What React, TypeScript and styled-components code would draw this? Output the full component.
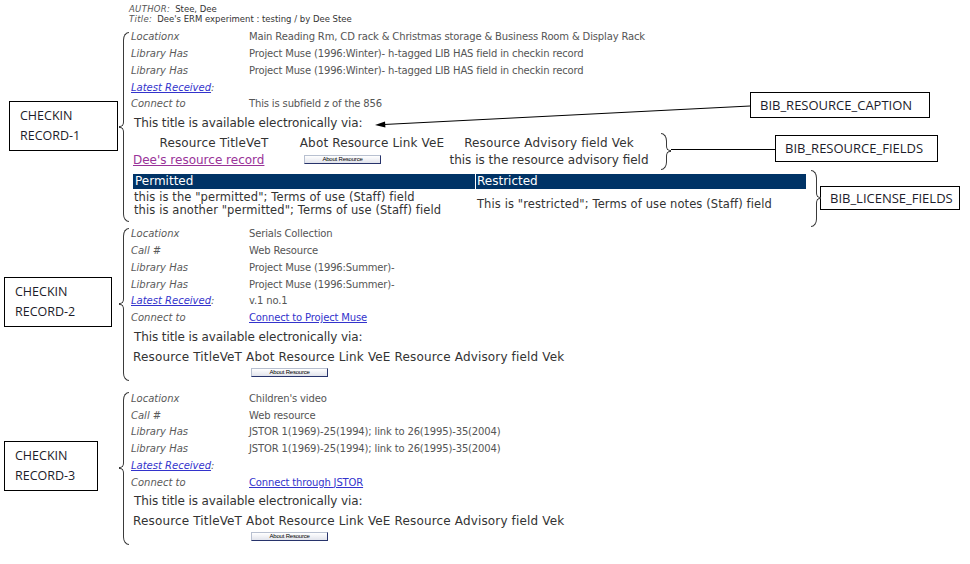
import React from 'react';
import styled, { createGlobalStyle } from 'styled-components';

const GlobalStyle = createGlobalStyle`
  html, body {
    margin: 0;
    padding: 0;
    background: #fff;
  }
  body {
    font-family: 'DejaVu Sans', Verdana, sans-serif;
    color: #333;
  }
`;

const Page = styled.div`
  width: 970px;
  height: 564px;
  overflow: hidden;
  padding-top: 4px;
  box-sizing: border-box;
`;

const BibHeader = styled.div`
  margin: 0 0 4.6px 129px;
  font-size: 8.5px;
  line-height: 10px;
  color: #333;
`;

const HeaderLine = styled.div`
  display: flex;
  gap: 5px;
`;

const HeaderLabel = styled.span`
  font-style: italic;
  color: #555;
  letter-spacing: 0.3px;
`;

const Record = styled.section`
  display: flex;
`;

const CalloutColumn = styled.div`
  width: 119px;
  flex-shrink: 0;
  display: flex;
  align-items: center;
`;

const Callout = styled.div<{ $left: number; $width: number; $lift: number }>`
  box-sizing: border-box;
  margin-left: ${(p) => p.$left}px;
  margin-bottom: ${(p) => p.$lift * 2}px;
  width: ${(p) => p.$width}px;
  height: 50px;
  padding: 4px 0 0 10px;
  border: 1px solid #000;
  font-family: 'Open Sans', sans-serif;
  font-size: 12.5px;
  line-height: 20px;
  color: #1c1c2a;
`;

const NoteBox = styled.div<{ $width: number; $height: number }>`
  box-sizing: border-box;
  flex-shrink: 0;
  width: ${(p) => p.$width}px;
  height: ${(p) => p.$height}px;
  padding-left: 9px;
  border: 1px solid #000;
  background: #fff;
  font-family: 'Open Sans', sans-serif;
  font-size: 13px;
  line-height: ${(p) => p.$height - 2}px;
  color: #1c1c2a;
  white-space: nowrap;
`;

/* curly brace built from four bordered pieces; flipped for the right-hand notes */
const BraceWrap = styled.div<{ $top: number; $bottom: number; $flip?: boolean; $height?: number }>`
  box-sizing: border-box;
  width: 10px;
  flex-shrink: 0;
  display: flex;
  flex-direction: column;
  padding: ${(p) => p.$top}px 0 ${(p) => p.$bottom}px;
  ${(p) => (p.$height ? `height: ${p.$height}px;` : '')}
  ${(p) => (p.$flip ? 'transform: scaleX(-1);' : '')}
`;

const BraceArm = styled.div<{ $end: 'top' | 'bottom' }>`
  flex: 1;
  margin-left: 4px;
  border-left: 1px solid #3a3a3a;
  ${(p) =>
    p.$end === 'top'
      ? 'border-top: 1px solid #3a3a3a; border-top-left-radius: 6px 8px;'
      : 'border-bottom: 1px solid #3a3a3a; border-bottom-left-radius: 6px 8px;'}
`;

const BraceTip = styled.div<{ $end: 'top' | 'bottom' }>`
  box-sizing: border-box;
  width: 5px;
  height: 5px;
  border-right: 1px solid #3a3a3a;
  ${(p) =>
    p.$end === 'top'
      ? 'border-bottom: 1px solid #3a3a3a; border-bottom-right-radius: 4px 5px;'
      : 'border-top: 1px solid #3a3a3a; border-top-right-radius: 4px 5px;'}
`;

type BraceProps = {
  top?: number;
  bottom?: number;
  flip?: boolean;
  height?: number;
  style?: React.CSSProperties;
};

const Brace = ({ top = 0, bottom = 0, flip, height, style }: BraceProps) => (
  <BraceWrap $top={top} $bottom={bottom} $flip={flip} $height={height} style={style}>
    <BraceArm $end="top" />
    <BraceTip $end="top" />
    <BraceTip $end="bottom" />
    <BraceArm $end="bottom" />
  </BraceWrap>
);

const RecordBody = styled.div`
  margin-left: 2px;
  padding-bottom: 8px;
  flex: 1;
  min-width: 0;
`;

const FieldGrid = styled.div`
  display: grid;
  grid-template-columns: 118px auto;
  grid-auto-rows: 16.75px;
  align-items: center;
  font-size: 10px;
  letter-spacing: -0.15px;
  color: #555;
  white-space: nowrap;
`;

const FieldLabel = styled.div`
  font-style: italic;
  color: #5a5a5a;
  letter-spacing: 0;
`;

const FieldLink = styled.a`
  color: #3333cc;
  text-decoration: underline;
`;

const Caption = styled.div`
  position: relative;
  padding: 4px 0 0 3px;
  font-size: 12px;
  line-height: 15px;
  letter-spacing: -0.1px;
  color: #333;
`;

const CaptionNote = styled.div`
  position: absolute;
  left: 619px;
  top: -20.35px;
  letter-spacing: 0;
`;

const CaptionArrow = styled.svg`
  position: absolute;
  left: 239px;
  top: -12.35px;
  overflow: visible;
`;

const ResourceBlock = styled.div`
  margin-top: 4px;
`;

const AnnotatedRow = styled.div<{ $gap: number }>`
  display: flex;
  align-items: flex-start;
  margin-top: ${(p) => p.$gap}px;
`;

const ResourceTable = styled.table`
  border-collapse: collapse;
  border-spacing: 0;
  font-size: 12px;
  color: #333;
  flex-shrink: 0;
`;

const ResourceHead = styled.th<{ $width?: number }>`
  font-weight: normal;
  padding: 0 2px;
  line-height: 17px;
  letter-spacing: 0.15px;
  text-align: center;
  white-space: nowrap;
  ${(p) => (p.$width ? `width: ${p.$width}px;` : '')}
`;

const ResourceCell = styled.td<{ $center?: boolean }>`
  padding: 0 2px;
  line-height: 17px;
  white-space: nowrap;
  text-align: ${(p) => (p.$center ? 'center' : 'left')};
  vertical-align: middle;
`;

const ResourceLink = styled.a`
  color: #993399;
  text-decoration: underline;
`;

const AboutButton = styled.button`
  display: block;
  box-sizing: border-box;
  width: 77px;
  height: 9px;
  margin: 2px 0 5px 5px;
  padding: 0;
  border: 1px solid;
  border-color: #b8c0d0 #27336b #27336b #b8c0d0;
  background: linear-gradient(#ffffff, #e2e4ec);
  font-family: 'Liberation Sans', Arial, sans-serif;
  font-size: 6px;
  line-height: 7px;
  letter-spacing: -0.2px;
  color: #000;
`;

const Leader = styled.div<{ $width: number; $top: number }>`
  flex-shrink: 0;
  width: ${(p) => p.$width}px;
  height: 1px;
  margin-top: ${(p) => p.$top}px;
  background: #000;
`;

const LicenseGrid = styled.div`
  flex-shrink: 0;
  display: grid;
  grid-template-columns: 342px 330px;
  gap: 2.5px 1px;
  margin-left: 2px;
`;

const LicenseHead = styled.div<{ $pad: number }>`
  background: #003366;
  color: #fff;
  font-size: 12px;
  line-height: 15px;
  padding-left: ${(p) => p.$pad}px;
`;

const LicenseCell = styled.div`
  align-self: center;
  padding-left: 1px;
  font-size: 11.5px;
  line-height: 13px;
  letter-spacing: 0.1px;
  color: #333;
  white-space: nowrap;
`;

type Field = { label: React.ReactNode; value?: React.ReactNode };

type RecordData = {
  id: number;
  callout: { left: number; width: number; lift: number };
  brace: { top: number; bottom: number };
  fields: Field[];
};

const latest = (
  <>
    <FieldLink href="#">Latest Received</FieldLink>:
  </>
);

const records: RecordData[] = [
  {
    id: 1,
    callout: { left: 9, width: 109, lift: 1 },
    brace: { top: 3.4, bottom: 3.5 },
    fields: [
      { label: 'Locationx', value: 'Main Reading Rm, CD rack & Christmas storage & Business Room & Display Rack' },
      { label: 'Library Has', value: 'Project Muse (1996:Winter)- h-tagged LIB HAS field in checkin record' },
      { label: 'Library Has', value: 'Project Muse (1996:Winter)- h-tagged LIB HAS field in checkin record' },
      { label: latest },
      { label: 'Connect to', value: 'This is subfield z of the 856' },
    ],
  },
  {
    id: 2,
    callout: { left: 4, width: 108, lift: 5.3 },
    brace: { top: 2.5, bottom: 9 },
    fields: [
      { label: 'Locationx', value: 'Serials Collection' },
      { label: 'Call #', value: 'Web Resource' },
      { label: 'Library Has', value: 'Project Muse (1996:Summer)-' },
      { label: 'Library Has', value: 'Project Muse (1996:Summer)-' },
      { label: latest, value: 'v.1 no.1' },
      { label: 'Connect to', value: <FieldLink href="#">Connect to Project Muse</FieldLink> },
    ],
  },
  {
    id: 3,
    callout: { left: 4, width: 94, lift: 5.8 },
    brace: { top: 2, bottom: 9.6 },
    fields: [
      { label: 'Locationx', value: "Children's video" },
      { label: 'Call #', value: 'Web resource' },
      { label: 'Library Has', value: 'JSTOR 1(1969)-25(1994); link to 26(1995)-35(2004)' },
      { label: 'Library Has', value: 'JSTOR 1(1969)-25(1994); link to 26(1995)-35(2004)' },
      { label: latest },
      { label: 'Connect to', value: <FieldLink href="#">Connect through JSTOR</FieldLink> },
    ],
  },
];

const ResourceHeadRow = ({ wide }: { wide?: boolean }) => (
  <tr>
    <ResourceHead $width={wide ? 162 : undefined}>Resource TitleVeT</ResourceHead>
    <ResourceHead $width={wide ? 146 : undefined}>Abot Resource Link VeE</ResourceHead>
    <ResourceHead $width={wide ? 200 : undefined}>Resource Advisory field Vek</ResourceHead>
  </tr>
);

const FullResources = () => (
  <>
    <AnnotatedRow $gap={4}>
      <ResourceTable>
        <tbody>
          <ResourceHeadRow wide />
          <tr>
            <ResourceCell>
              <ResourceLink href="#">Dee's resource record</ResourceLink>
            </ResourceCell>
            <ResourceCell>
              <AboutButton type="button">About Resource</AboutButton>
            </ResourceCell>
            <ResourceCell $center>this is the resource advisory field</ResourceCell>
          </tr>
        </tbody>
      </ResourceTable>
      <Brace flip height={37} style={{ marginLeft: 10, marginTop: -2.5, marginBottom: -20 }} />
      <Leader $width={104} $top={13.5} />
      <NoteBox $width={163} $height={27} style={{ marginTop: -0.5, marginBottom: -20 }}>
        BIB_RESOURCE_FIELDS
      </NoteBox>
    </AnnotatedRow>
    <AnnotatedRow $gap={4.65}>
      <LicenseGrid>
        <LicenseHead $pad={2}>Permitted</LicenseHead>
        <LicenseHead $pad={1}>Restricted</LicenseHead>
        <LicenseCell>
          this is the "permitted"; Terms of use (Staff) field
          <br />
          this is another "permitted"; Terms of use (Staff) field
        </LicenseCell>
        <LicenseCell>This is "restricted"; Terms of use notes (Staff) field</LicenseCell>
      </LicenseGrid>
      <Brace flip height={57} style={{ marginLeft: 5, marginTop: -4, marginBottom: -30 }} />
      <NoteBox $width={140} $height={24} style={{ marginLeft: -1, marginTop: 12, marginBottom: -30 }}>
        BIB_LICENSE_FIELDS
      </NoteBox>
    </AnnotatedRow>
  </>
);

const BriefResources = () => (
  <ResourceBlock>
    <ResourceTable>
      <tbody>
        <ResourceHeadRow />
        <tr>
          <ResourceCell />
          <ResourceCell>
            <AboutButton type="button">About Resource</AboutButton>
          </ResourceCell>
          <ResourceCell />
        </tr>
      </tbody>
    </ResourceTable>
  </ResourceBlock>
);

const App = () => (
  <Page>
    <GlobalStyle />
    <BibHeader>
      <HeaderLine>
        <HeaderLabel>AUTHOR:</HeaderLabel>
        <span>Stee, Dee</span>
      </HeaderLine>
      <HeaderLine>
        <HeaderLabel>Title:</HeaderLabel>
        <span>Dee's ERM experiment : testing / by Dee Stee</span>
      </HeaderLine>
    </BibHeader>

    {records.map((record) => (
      <Record key={record.id}>
        <CalloutColumn>
          <Callout $left={record.callout.left} $width={record.callout.width} $lift={record.callout.lift}>
            CHECKIN
            <br />
            RECORD-{record.id}
          </Callout>
        </CalloutColumn>
        <Brace top={record.brace.top} bottom={record.brace.bottom} />
        <RecordBody>
          <FieldGrid>
            {record.fields.map((field, i) => (
              <React.Fragment key={i}>
                <FieldLabel>{field.label}</FieldLabel>
                <div>{field.value}</div>
              </React.Fragment>
            ))}
          </FieldGrid>
          <Caption>
            This title is available electronically via:
            {record.id === 1 && (
              <>
                <CaptionArrow width={380} height={30} viewBox="0 0 380 30">
                  <line x1={380} y1={6} x2={12} y2={24.6} stroke="#000" strokeWidth={1} />
                  <polygon points="5,25 15,21.6 15.4,27.4" fill="#000" />
                </CaptionArrow>
                <CaptionNote>
                  <NoteBox $width={180} $height={26}>
                    BIB_RESOURCE_CAPTION
                  </NoteBox>
                </CaptionNote>
              </>
            )}
          </Caption>
          {record.id === 1 ? <FullResources /> : <BriefResources />}
        </RecordBody>
      </Record>
    ))}
  </Page>
);

export default App;
